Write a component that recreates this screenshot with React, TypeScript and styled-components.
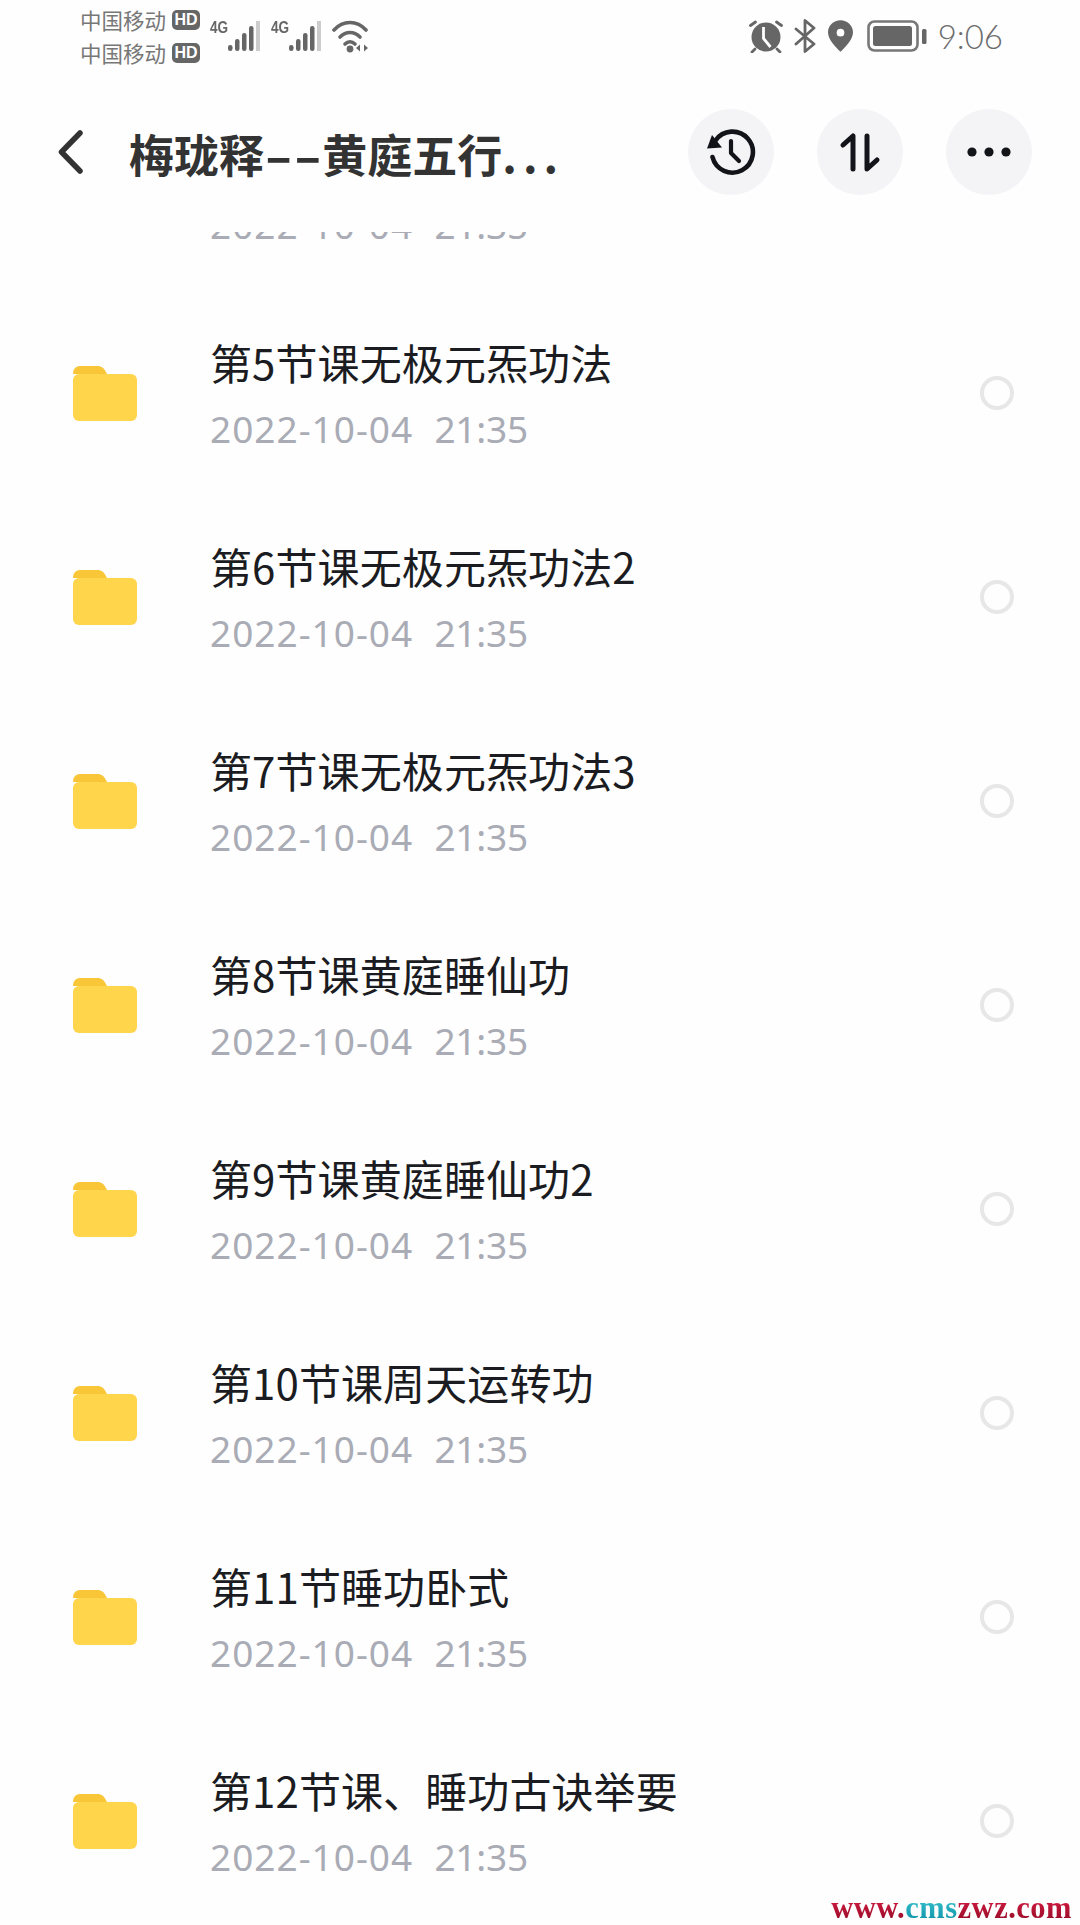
import styled, { createGlobalStyle } from 'styled-components'

const GlobalStyle = createGlobalStyle`
    html, body {
        margin: 0;
        padding: 0;
        background: #fefefe;
    }
    * {
        box-sizing: border-box;
    }
`

const Page = styled.div`
    position: relative;
    width: 1080px;
    height: 1925px;
    overflow: hidden;
    display: flex;
    flex-direction: column;
    background: #fefefe;
    font-family: 'Noto Sans CJK SC', 'Noto Sans', sans-serif;
`

const StatusBar = styled.div`
    height: 70px;
    padding: 2px 77px 0 80px;
    display: flex;
    align-items: center;
    justify-content: space-between;
    color: #666;
`

const StatusGroup = styled.div`
    display: flex;
    align-items: center;
`

const StatusIcon = styled.div<{ $gap: number }>`
    display: flex;
    margin-right: ${(p) => p.$gap}px;
`

const Carriers = styled.div`
    display: flex;
    flex-direction: column;
    gap: 7px;
    margin-right: 10px;
`

const Carrier = styled.div`
    display: flex;
    align-items: center;
    gap: 6px;
    height: 26px;
    font-size: 21.5px;
    color: #777;
`

const HdBadge = styled.span`
    width: 28px;
    height: 20px;
    border-radius: 5px;
    background: #666;
    color: #fff;
    font: 700 16px/20px 'Liberation Sans', sans-serif;
    text-align: center;
`

const Signal = styled.div`
    position: relative;
    width: 56px;
    height: 34px;
    margin-right: 5px;
`

const NetLabel = styled.span`
    position: absolute;
    left: 0;
    top: 0;
    font: 700 17px/18px 'Liberation Sans', sans-serif;
    color: #666;
    transform: scaleX(0.8);
    transform-origin: left top;
`

const Clock = styled.span`
    margin-left: 11px;
    font: 300 33px/40px Lato, sans-serif;
    color: #6c6c6c;
`

const NavBar = styled.div`
    height: 162px;
    padding: 2px 48px 0 58px;
    display: flex;
    align-items: center;
`

const BackButton = styled.div`
    width: 71px;
    display: flex;
    align-items: center;
`

const PageTitle = styled.div`
    flex: 1;
    margin-top: 4px;
    font-size: 45px;
    font-weight: 700;
    line-height: 60px;
    color: #333;
    white-space: nowrap;
`

const TitleDashes = styled.span`
    display: inline-block;
    margin-right: 25px;
    transform: scaleX(1.75);
    transform-origin: left center;
`

const TitleDots = styled.span`
    letter-spacing: 6px;
`

const Actions = styled.div`
    display: flex;
    gap: 43px;
`

const RoundButton = styled.div`
    width: 86px;
    height: 86px;
    border-radius: 50%;
    background: #f4f4f6;
    display: flex;
    align-items: center;
    justify-content: center;
`

const ListViewport = styled.div`
    flex: 1;
    overflow: hidden;
`

const List = styled.div`
    margin-top: -145px;
`

const Row = styled.div`
    height: 204px;
    padding: 0 66px 0 73px;
    display: flex;
    align-items: center;
`

const FolderBox = styled.div`
    width: 137px;
    display: flex;
`

const RowText = styled.div`
    flex: 1;
    padding-top: 2px;
    display: flex;
    flex-direction: column;
    gap: 10px;
`

const RowTitle = styled.div`
    height: 60px;
    font-size: 42px;
    line-height: 60px;
    letter-spacing: 0.1px;
    color: #1b1c21;
    white-space: nowrap;
`

const RowDate = styled.div`
    height: 54px;
    font: 400 37px/54px 'Noto Sans', sans-serif;
    letter-spacing: 1px;
    color: #a9abb5;
    white-space: pre;
`

const RowTime = styled.span`
    letter-spacing: -0.2px;
`

const Radio = styled.div`
    width: 34px;
    height: 34px;
    border-radius: 50%;
    border: 4px solid #e7e7e8;
`

const Watermark = styled.div`
    position: absolute;
    right: 8px;
    bottom: 2px;
    font: 700 30.5px/30px 'Liberation Serif', serif;
    letter-spacing: 0.5px;
    white-space: nowrap;
`

const WatermarkPart = styled.span<{ $from: string; $to: string }>`
    background: linear-gradient(${(p) => p.$from}, ${(p) => p.$to});
    -webkit-background-clip: text;
    background-clip: text;
    color: transparent;
`

function SignalBars() {
    return (
        <svg width="56" height="34" viewBox="0 0 56 34">
            <g fill="#666">
                <rect x="18" y="26" width="4.500" height="6" rx="2.200" />
                <rect x="25" y="20" width="4.500" height="12" rx="2.200" />
                <rect x="32" y="14" width="4.500" height="18" rx="2.200" />
                <rect x="39" y="7" width="4.500" height="25" rx="2.200" />
            </g>
            <rect x="46" y="2" width="4" height="30" fill="#ccc" />
        </svg>
    )
}

function Wifi() {
    return (
        <svg width="40" height="36" viewBox="0 0 40 36" fill="none">
            <g stroke="#666" strokeWidth="3.600" strokeLinecap="round">
                <path d="M2 12C11 2 25 2 34 12" />
                <path d="M8 19C14 13 22 13 28 19" />
                <path d="M13 26C16 23 20 23 23 26" />
            </g>
            <circle cx="18" cy="31" r="3.400" fill="#666" />
            <path d="M28 26.500v7l-4-3.500zM32 26.500v7l4-3.500z" fill="#666" />
        </svg>
    )
}

function Alarm() {
    return (
        <svg width="34" height="34" viewBox="0 0 34 34">
            <circle cx="17" cy="18" r="14.500" fill="#666" />
            <path d="M14.500 8v11.500l7 8.500" stroke="#fff" strokeWidth="2.800" fill="none" />
            <path d="M1.500 6.500l5-3.500M32.500 6.500l-5-3.500M6 30l-3 3M28 30l3 3" stroke="#666" strokeWidth="2.800" strokeLinecap="round" />
        </svg>
    )
}

function Bluetooth() {
    return (
        <svg width="22" height="34" viewBox="0 0 22 34" fill="none">
            <path
                d="M2 10l18 15-9 7.500V1.500L20 9 2 25"
                stroke="#666"
                strokeWidth="2.800"
                strokeLinejoin="round"
                strokeLinecap="round"
            />
        </svg>
    )
}

function Pin() {
    return (
        <svg width="25" height="32" viewBox="0 0 26 33">
            <path
                fillRule="evenodd"
                fill="#666"
                d="M13 0C6 0 0 5.500 0 12.500 0 20 8 28 13 33 18 28 26 20 26 12.500 26 5.500 20 0 13 0ZM13 9a4 4 0 1 1 0 8 4 4 0 0 1 0-8Z"
            />
        </svg>
    )
}

function Battery() {
    return (
        <svg width="60" height="32" viewBox="0 0 60 32">
            <rect x="1.500" y="1.500" width="49" height="29" rx="6" fill="none" stroke="#777" strokeWidth="2.600" />
            <rect x="6" y="6" width="39" height="20" rx="2.500" fill="#666" />
            <rect x="55" y="9" width="4.500" height="15" rx="1.500" fill="#666" />
        </svg>
    )
}

function Folder() {
    return (
        <svg width="64" height="55" viewBox="0 0 64 55">
            <path d="M0 7a7 7 0 0 1 7-7h17c5 0 7 2 10 8H0Z" fill="#f8c636" />
            <rect x="0" y="8" width="64" height="47" rx="6" fill="#ffd54b" />
        </svg>
    )
}

function BackIcon() {
    return (
        <svg width="26" height="44" viewBox="0 0 26 44" fill="none">
            <path
                d="M22 3L3.500 22 22 41"
                stroke="#333"
                strokeWidth="5.500"
                strokeLinecap="round"
                strokeLinejoin="round"
            />
        </svg>
    )
}

function HistoryIcon() {
    return (
        <svg width="50" height="50" viewBox="0 0 50 50" fill="none">
            <path
                d="M6.500 30a20.500 20.500 0 1 0 3-16.500"
                stroke="#13141a"
                strokeWidth="4.600"
                strokeLinecap="round"
            />
            <path d="M6 8l10 12.500L1 21.500Z" fill="#13141a" />
            <path d="M25 14v12l8 8" stroke="#13141a" strokeWidth="4.200" strokeLinecap="round" strokeLinejoin="round" />
        </svg>
    )
}

function SortIcon() {
    return (
        <svg width="86" height="86" viewBox="0 0 86 86" fill="none">
            <path
                d="M26 36l10-9v33M50 27v33l10-9"
                stroke="#13141a"
                strokeWidth="5"
                strokeLinecap="round"
                strokeLinejoin="round"
            />
        </svg>
    )
}

function MoreIcon() {
    return (
        <svg width="60" height="16" viewBox="0 0 60 16" fill="#13141a">
            <circle cx="13" cy="8" r="4.600" />
            <circle cx="30" cy="8" r="4.600" />
            <circle cx="47" cy="8" r="4.600" />
        </svg>
    )
}

const files = [
    '',
    '第5节课无极元炁功法',
    '第6节课无极元炁功法2',
    '第7节课无极元炁功法3',
    '第8节课黄庭睡仙功',
    '第9节课黄庭睡仙功2',
    '第10节课周天运转功',
    '第11节睡功卧式',
    '第12节课、睡功古诀举要',
]

export default function App() {
    return (
        <Page>
            <GlobalStyle />
            <StatusBar>
                <StatusGroup>
                    <Carriers>
                        <Carrier>
                            中国移动<HdBadge>HD</HdBadge>
                        </Carrier>
                        <Carrier>
                            中国移动<HdBadge>HD</HdBadge>
                        </Carrier>
                    </Carriers>
                    <Signal>
                        <NetLabel>4G</NetLabel>
                        <SignalBars />
                    </Signal>
                    <Signal>
                        <NetLabel>4G</NetLabel>
                        <SignalBars />
                    </Signal>
                    <Wifi />
                </StatusGroup>
                <StatusGroup>
                    <StatusIcon $gap={11}>
                        <Alarm />
                    </StatusIcon>
                    <StatusIcon $gap={12}>
                        <Bluetooth />
                    </StatusIcon>
                    <StatusIcon $gap={14}>
                        <Pin />
                    </StatusIcon>
                    <Battery />
                    <Clock>9:06</Clock>
                </StatusGroup>
            </StatusBar>
            <NavBar>
                <BackButton>
                    <BackIcon />
                </BackButton>
                <PageTitle>
                    梅珑释<TitleDashes>--</TitleDashes>黄庭五行<TitleDots>...</TitleDots>
                </PageTitle>
                <Actions>
                    <RoundButton>
                        <HistoryIcon />
                    </RoundButton>
                    <RoundButton>
                        <SortIcon />
                    </RoundButton>
                    <RoundButton>
                        <MoreIcon />
                    </RoundButton>
                </Actions>
            </NavBar>
            <ListViewport>
                <List>
                    {files.map((name, i) => (
                        <Row key={i}>
                            <FolderBox>
                                <Folder />
                            </FolderBox>
                            <RowText>
                                <RowTitle>{name}</RowTitle>
                                <RowDate>
                                    2022-10-04  <RowTime>21:35</RowTime>
                                </RowDate>
                            </RowText>
                            <Radio />
                        </Row>
                    ))}
                </List>
            </ListViewport>
            <Watermark>
                <WatermarkPart $from="#e8204c" $to="#8a0a22">www.</WatermarkPart>
                <WatermarkPart $from="#3fd0dc" $to="#0c8aa0">cms</WatermarkPart>
                <WatermarkPart $from="#e8204c" $to="#8a0a22">zwz.com</WatermarkPart>
            </Watermark>
        </Page>
    )
}
